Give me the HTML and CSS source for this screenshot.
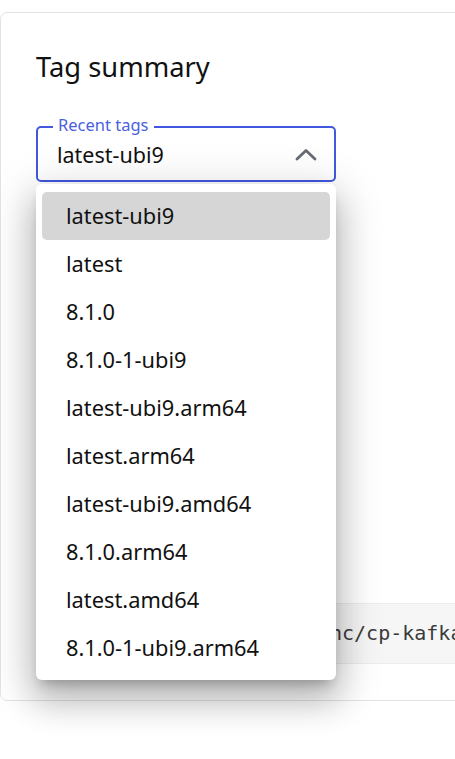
FILE: index.html
```html
<!DOCTYPE html>
<html>
<head>
<meta charset="utf-8">
<link rel="stylesheet" href="styles.css">
</head>
<body>
<div class="page">
  <section class="card">
    <h2 class="title">Tag summary</h2>
    <div class="select">
      <span class="select-label">Recent tags</span>
      <span class="select-value">latest-ubi9</span>
      <svg class="chevron" width="22" height="14" viewBox="0 0 22 14"><polyline points="2,12 11,3.5 20,12" fill="none" stroke="#676b73" stroke-width="2.8" stroke-linecap="round" stroke-linejoin="round"/></svg>
      <ul class="menu">
        <li class="item selected">latest-ubi9</li>
        <li class="item">latest</li>
        <li class="item">8.1.0</li>
        <li class="item">8.1.0-1-ubi9</li>
        <li class="item">latest-ubi9.arm64</li>
        <li class="item">latest.arm64</li>
        <li class="item">latest-ubi9.amd64</li>
        <li class="item">8.1.0.arm64</li>
        <li class="item">latest.amd64</li>
        <li class="item">8.1.0-1-ubi9.arm64</li>
      </ul>
    </div>
    <pre class="code">$ docker pull confluentinc/cp-kafka:latest-ubi9</pre>
  </section>
</div>
</body>
</html>
```

FILE: styles.css
```css
html, body {
  margin: 0;
  padding: 0;
  background: #ffffff;
  overflow: hidden;
}
body {
  font-family: "Noto Sans", "Open Sans", sans-serif;
  color: #111111;
}
.page {
  padding-top: 12px;
  width: 455px;
  height: 759px;
  overflow: hidden;
}
.card {
  box-sizing: border-box;
  width: 640px;
  height: 689px;
  border: 1px solid #e3e3e3;
  border-radius: 7px;
  padding: 34px 0 36px 35px;
  display: flex;
  flex-direction: column;
  align-items: flex-start;
}
.title {
  margin: 0;
  font-size: 27.3px;
  font-weight: 400;
  line-height: 40px;
  color: #111;
}
.select {
  position: relative;
  box-sizing: border-box;
  margin-top: 39px;
  width: 300px;
  height: 56px;
  border: 2px solid #4258df;
  border-radius: 5px;
  display: flex;
  align-items: center;
  padding: 0 17px 0 19px;
}
.select-label {
  position: absolute;
  left: 15px;
  top: -13px;
  padding: 0 5px;
  background: #fff;
  font-size: 16.5px;
  line-height: 20px;
  color: #4b5fe0;
}
.select-value {
  flex: 1;
  font-size: 21.5px;
  line-height: 26px;
  padding-top: 1px;
}
.chevron {
  margin-top: -1px;
}
.menu {
  position: absolute;
  left: -2px;
  top: 56px;
  width: 300px;
  box-sizing: border-box;
  margin: 0;
  padding: 8px 6px;
  list-style: none;
  background: #fff;
  border-radius: 6px;
  box-shadow: 0 8px 12px -5px rgba(0,0,0,0.24), 0 20px 32px 2px rgba(0,0,0,0.18), 0 10px 44px 8px rgba(0,0,0,0.14);
  z-index: 2;
}
.item {
  height: 48px;
  line-height: 48px;
  padding-left: 24px;
  font-size: 21.8px;
  border-radius: 5px;
  color: #111;
}
.item.selected {
  background: #d6d6d6;
}
.code {
  margin: auto 0 0 0;
  box-sizing: border-box;
  width: 604px;
  height: 61px;
  background: #f6f6f6;
  border: 1px solid #ececec;
  border-radius: 4px;
  padding: 0 4px;
  font-family: "DejaVu Sans Mono", "Liberation Mono", monospace;
  font-size: 20px;
  line-height: 59px;
  color: #3a3a3a;
  white-space: pre;
  overflow: hidden;
}
```
